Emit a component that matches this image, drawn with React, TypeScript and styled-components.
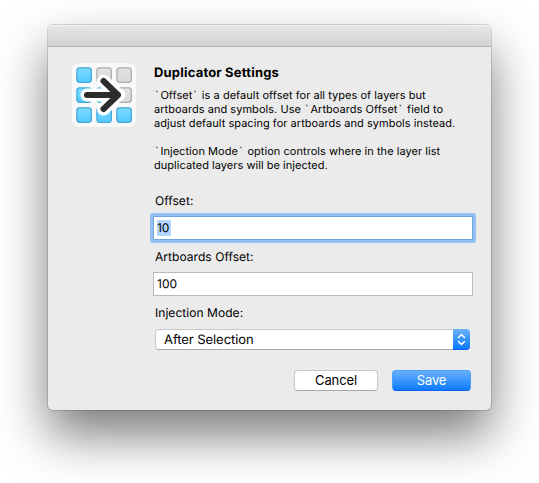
import React from "react";
import styled, { createGlobalStyle } from "styled-components";

const GlobalStyle = createGlobalStyle`
  * { box-sizing: border-box; }
  body {
    margin: 0;
    background: #fff;
    color: #000;
    font-family: Inter, "Liberation Sans", sans-serif;
    text-rendering: geometricPrecision;
    overflow: hidden;
  }
`;

const Desktop = styled.main`
  width: 539px;
  height: 483px;
  padding: 25px 48px;
`;

const Dialog = styled.section`
  width: 443px;
  height: 385px;
  border-radius: 5px;
  background: #ebebeb;
  box-shadow: 0 0 0 1px rgba(0, 0, 0, 0.14), 0 25px 50px rgba(0, 0, 0, 0.52);
`;

const TitleBar = styled.header`
  height: 22px;
  border-radius: 5px 5px 0 0;
  border-bottom: 1px solid #b4b2b4;
  background: linear-gradient(#e8e6e8, #d3d1d3);
  box-shadow: inset 0 1px 0 #f4f3f4;
`;

const Content = styled.div`
  display: grid;
  grid-template-columns: 64px 1fr;
  column-gap: 17px;
  padding: 16px 18px 0 24px;
`;

const Body = styled.div`
  display: flex;
  flex-direction: column;
`;

const Title = styled.h1`
  margin: 2px 0 0 1px;
  font-size: 13px;
  line-height: 16px;
  font-weight: 700;
  letter-spacing: 0.19px;
`;

const Description = styled.p`
  margin: 7px 0 0 1px;
  font-size: 11px;
  line-height: 14px;
  white-space: pre;
`;

const Line = styled.span`
  display: block;
  height: 14px;
  letter-spacing: 0.04px;
`;

const Tick = styled.span`
  padding: 0 1.8px 0 1px;
`;

const Label = styled.label<{ $top: number }>`
  margin: ${(p) => p.$top}px 0 0 2px;
  font-size: 12px;
  line-height: 16px;
  letter-spacing: 0.05px;
`;

const Field = styled.div<{ $focused?: boolean }>`
  width: 320px;
  height: 24px;
  margin-top: 7px;
  padding: 3px 3px;
  border: 1px solid ${(p) => (p.$focused ? "#6ea5dc" : "#b9b9b9")};
  background: #fff;
  box-shadow: ${(p) => (p.$focused ? "0 0 0 3px #94c1f2" : "none")};
  border-radius: ${(p) => (p.$focused ? "1px" : "0")};
  font-size: 12px;
  line-height: 16px;
`;

const Selected = styled.span`
  display: inline-block;
  height: 16px;
  width: 14px;
  background: #b2d7ff;
  letter-spacing: -0.2px;
`;

const Select = styled.div`
  display: flex;
  width: 315px;
  height: 21px;
  margin: 8px 0 0 2px;
  border-radius: 4px;
  background: #fff;
  border: 1px solid #c6c6c6;
  border-bottom-color: #a9a9a9;
`;

const SelectValue = styled.span`
  flex: 1;
  padding: 1px 0 0 8px;
  font-size: 13px;
  line-height: 19px;
  letter-spacing: -0.06px;
`;

const Stepper = styled.span`
  display: grid;
  place-items: center;
  width: 17px;
  height: 21px;
  margin: -1px -1px 0 0;
  border-radius: 0 4px 4px 0;
  background: linear-gradient(#6bb3fa, #0a78ff);
  border-bottom: 1px solid #0a5fff;
`;

const Actions = styled.footer`
  display: flex;
  gap: 14px;
  margin: 20px 0 0 141px;
`;

const Button = styled.button<{ $primary?: boolean }>`
  width: ${(p) => (p.$primary ? 79 : 84)}px;
  height: 21px;
  padding: 0;
  border-radius: 4px;
  border: 1px solid ${(p) => (p.$primary ? "#4a9ff8" : "#c8c8c8")};
  border-bottom-color: ${(p) => (p.$primary ? "#0a5ff5" : "#a9a9a9")};
  background: ${(p) => (p.$primary ? "linear-gradient(#6bb3fa, #0a78ff) border-box" : "#fff")};
  color: ${(p) => (p.$primary ? "#fff" : "#000")};
  font: 400 13px/19px Inter, "Liberation Sans", sans-serif;
  letter-spacing: -0.1px;
`;

const cells = [
  [4, 4, true], [24, 4, false], [44, 4, false],
  [4, 24, true], [24, 24, true], [44, 24, false],
  [4, 44, true], [24, 44, true], [44, 44, true],
] as const;

const AppIcon = () => (
  <svg width="64" height="64" viewBox="0 0 64 64">
    <defs>
      <linearGradient id="blue" x2="0" y2="1">
        <stop stopColor="#7fdaff" /><stop offset="1" stopColor="#55cbff" />
      </linearGradient>
      <linearGradient id="grey" x2="0" y2="1">
        <stop stopColor="#e2e2e2" /><stop offset="1" stopColor="#d8d8d8" />
      </linearGradient>
    </defs>
    <rect width="64" height="64" rx="7" fill="#f8f8f8" />
    {cells.map(([x, y, on]) => (
      <rect key={`${x}-${y}`} x={x + 0.9} y={y + 0.9} width="14.4" height="14.4" rx="2.8"
        fill={on ? "url(#blue)" : "url(#grey)"} stroke={on ? "#40a9da" : "#adadad"} strokeWidth="1.3" />
    ))}
    <g fill="none" strokeLinecap="round" strokeLinejoin="round">
      <path d="M15 32H47M31.5 18L46 32L31.5 46" stroke="#fff" strokeWidth="13" />
      <path d="M15 32H46M31.5 18L46 32L31.5 46" stroke="#2d2d2d" strokeWidth="6" />
    </g>
  </svg>
);

const Chevrons = () => (
  <svg width="9" height="13" viewBox="0 0 9 13" fill="none" stroke="#fff" strokeWidth="1.5"
    strokeLinecap="round" strokeLinejoin="round">
    <path d="M1.5 4.5L4.5 1.5L7.5 4.5M1.5 8.5L4.5 11.5L7.5 8.5" />
  </svg>
);

export default function App() {
  return (
    <>
      <GlobalStyle />
      <Desktop>
        <Dialog>
          <TitleBar />
          <Content>
            <AppIcon />
            <Body>
              <Title>Duplicator Settings</Title>
              <Description>
                <Line><Tick>`</Tick>Offset<Tick>`</Tick> is a default offset for all types of layers but</Line>
                <Line>artboards and symbols. Use <Tick>`</Tick>Artboards Offset<Tick>`</Tick> field to</Line>
                <Line>adjust default spacing for artboards and symbols instead.</Line>
                <Line />
                <Line><Tick>`</Tick>Injection Mode<Tick>`</Tick> option controls where in the layer list</Line>
                <Line>duplicated layers will be injected.</Line>
              </Description>
              <Label $top={21}>Offset:</Label>
              <Field $focused><Selected>10</Selected></Field>
              <Label $top={9}>Artboards Offset:</Label>
              <Field>100</Field>
              <Label $top={9}>Injection Mode:</Label>
              <Select>
                <SelectValue>After Selection</SelectValue>
                <Stepper><Chevrons /></Stepper>
              </Select>
              <Actions>
                <Button>Cancel</Button>
                <Button $primary>Save</Button>
              </Actions>
            </Body>
          </Content>
        </Dialog>
      </Desktop>
    </>
  );
}
